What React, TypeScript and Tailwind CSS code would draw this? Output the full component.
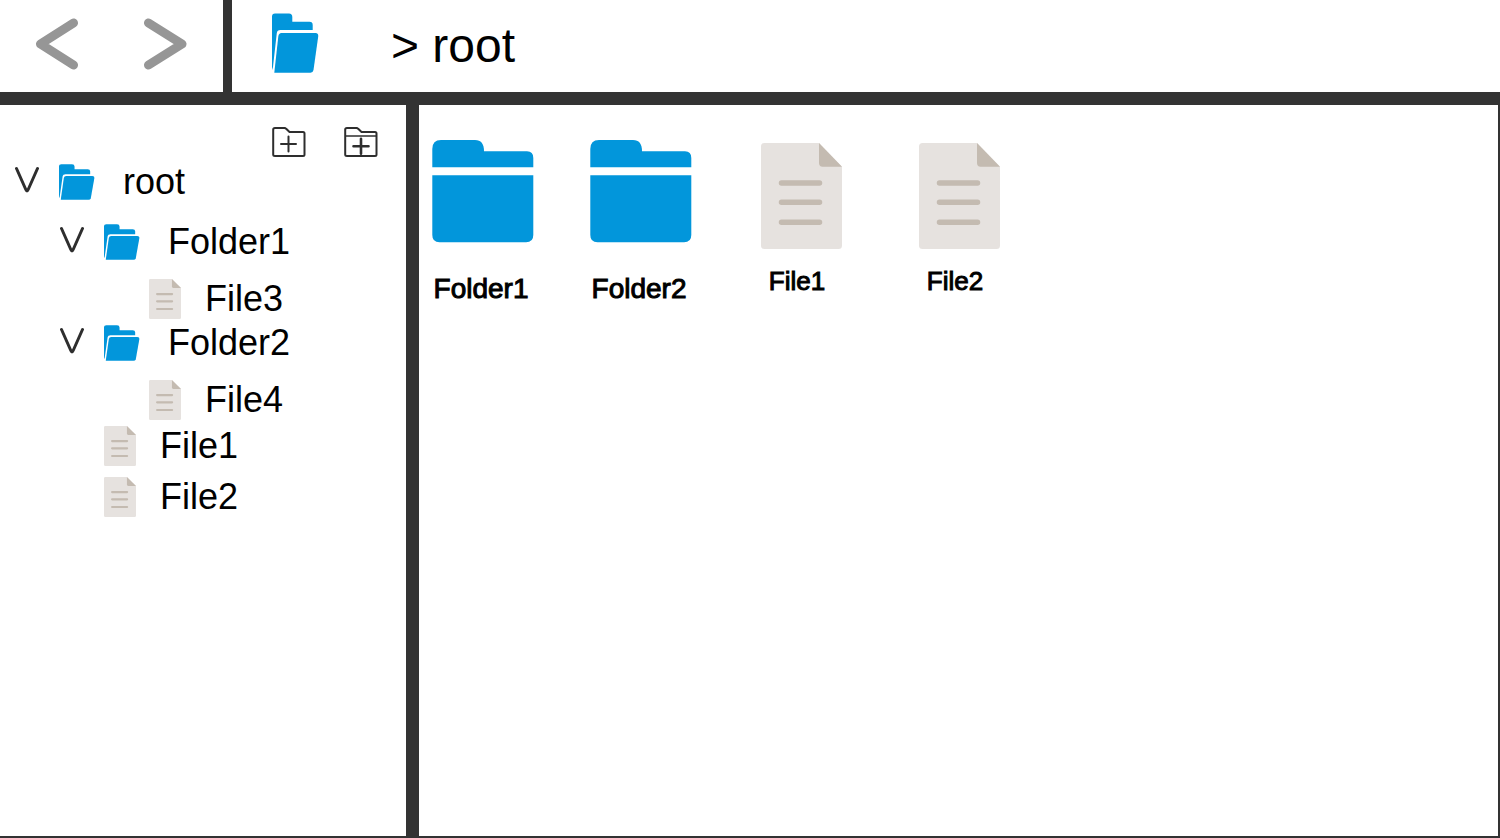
type IconProps = { className?: string };

function OpenFolderIcon({ className }: IconProps) {
  return (
    <svg className={className} viewBox="0 0 47 60" preserveAspectRatio="none" fill="#0296db" aria-hidden="true">
      <path d="M0 3.5Q0 .5 3 .5H17Q20.3 .5 20.3 4V8.7H37.5Q40.7 8.7 40.7 12V17H8.5Q5.1 17 4.8 20L1.2 52L.7 57L0 54Z" />
      <path d="M9.5 20H43.5Q46.6 20 46.2 23.5L41.5 57Q41 59.7 38.5 59.7H2.3L6.3 23.5Q6.7 20 9.5 20Z" />
    </svg>
  );
}

function FolderIcon({ className }: IconProps) {
  return (
    <svg className={className} viewBox="0 0 102 103" fill="#0296db" aria-hidden="true">
      <path d="M.3 9Q.3 0 9 0H43Q52 0 52 11.3H95Q101.3 11.3 101.3 18V27.3H.3Z" />
      <path d="M.3 35.3H101.3V95Q101.3 102.3 94 102.3H7.5Q.3 102.3 .3 95Z" />
    </svg>
  );
}

function FileIcon({ className }: IconProps) {
  return (
    <svg className={className} viewBox="0 0 81 106" preserveAspectRatio="none" aria-hidden="true">
      <path d="M3.5 0H58L81 23.7V102.5Q81 106 77.5 106H3.5Q0 106 0 102.5V3.5Q0 0 3.5 0Z" fill="#e6e2df" />
      <path d="M58 0L81 23.7H61.5Q58 23.7 58 20Z" fill="#c4bbb1" />
      <path d="M20.5 40H58.5M20.5 59.2H58.5M20.5 79.3H58.5" stroke="#c4bbb1" strokeWidth="5.5" strokeLinecap="round" />
    </svg>
  );
}

function ChevronIcon() {
  return (
    <svg className="mb-1 h-7 w-6 shrink-0" viewBox="0 0 24 28" fill="none" stroke="#2e2e2e" strokeWidth="3" strokeLinecap="round" strokeLinejoin="round" aria-hidden="true">
      <path d="M1.500 2.500L10.800 23.500Q12 26.500 13.200 23.500L22.500 2.500" />
    </svg>
  );
}

function NewFileIcon() {
  return (
    <svg className="h-8 w-[34px]" viewBox="0 0 34 32" fill="none" stroke="#2e2e2e" strokeWidth="2" aria-hidden="true">
      <path d="M3 2H12.5Q13.5 2 14.2 2.8L17.5 6H31Q32.5 6 32.5 7.5V28.5Q32.5 30 31 30H3Q1.200 30 1.200 28.5V3.5Q1.200 2 3 2Z" />
      <path d="M9 18H24M16.5 10.5V25.5" strokeLinecap="round" />
    </svg>
  );
}

function NewFolderIcon() {
  return (
    <svg className="h-8 w-[34px]" viewBox="0 0 34 32" fill="none" stroke="#2e2e2e" strokeWidth="2" aria-hidden="true">
      <path d="M3 2H12.5Q13.5 2 14.2 2.8L17.5 6H31Q32.5 6 32.5 7.5V28.5Q32.5 30 31 30H3Q1.200 30 1.200 28.5V3.5Q1.200 2 3 2Z" />
      <path d="M1.200 10H32.500" strokeWidth="1.500" />
      <path d="M9.500 20.300H24.500M17 12.800V27.800" strokeWidth="2.600" strokeLinecap="round" />
    </svg>
  );
}

type Node = { name: string; children?: Node[] };

const root: Node = {
  name: "root",
  children: [
    { name: "Folder1", children: [{ name: "File3" }] },
    { name: "Folder2", children: [{ name: "File4" }] },
    { name: "File1" },
    { name: "File2" },
  ],
};

function TreeNode({ node, depth }: { node: Node; depth: number }) {
  if (!node.children) {
    return (
      <li>
        <button
          type="button"
          className={`flex items-center gap-6 pl-11 text-[36px] leading-10 ${depth > 1 ? "h-[41px]" : "h-[51px]"}`}
        >
          <FileIcon className="h-10 w-8 shrink-0" />
          {node.name}
        </button>
      </li>
    );
  }
  return (
    <li>
      <button
        type="button"
        aria-expanded="true"
        className="mb-3 flex h-12 items-center gap-5 text-[36px] leading-10"
      >
        <ChevronIcon />
        <OpenFolderIcon className="h-9 w-9 shrink-0" />
        <span className="pl-2">{node.name}</span>
      </button>
      <ul className="pl-[45px]">
        {node.children.map((child) => (
          <TreeNode key={child.name} node={child} depth={depth + 1} />
        ))}
      </ul>
    </li>
  );
}

function GridItem({ node }: { node: Node }) {
  return (
    <li className="w-[102px]">
      <button type="button" className="flex w-full flex-col items-center [-webkit-text-stroke:1px_black]">
        {node.children ? (
          <>
            <FolderIcon className="h-[103px] w-[102px]" />
            <span className="mt-7 mr-1 text-[28px] leading-9">{node.name}</span>
          </>
        ) : (
          <>
            <FileIcon className="mt-[3px] ml-1 h-[106px] w-[81px]" />
            <span className="mt-4 mr-1 text-[26px] leading-8">{node.name}</span>
          </>
        )}
      </button>
    </li>
  );
}

export default function App() {
  return (
    <div className="flex min-h-screen flex-col border-b-2 border-[#333333] bg-white font-['Liberation_Sans',Arial,sans-serif] text-black">
      <header className="flex h-[105px] border-b-[13px] border-[#333333]">
        <div className="flex w-[232px] shrink-0 items-center gap-16 border-r-[9px] border-[#333333] pb-1 pl-[35px]">
          <button type="button" aria-label="Back">
            <svg className="h-[54px] w-11" viewBox="0 0 44 54" fill="none" stroke="#969696" strokeWidth="9" strokeLinecap="round" strokeLinejoin="round">
              <path d="M38.500 6L5.500 27L38.500 48" />
            </svg>
          </button>
          <button type="button" aria-label="Forward">
            <svg className="h-[54px] w-11" viewBox="0 0 44 54" fill="none" stroke="#969696" strokeWidth="9" strokeLinecap="round" strokeLinejoin="round">
              <path d="M5.500 6L39 27L5.500 48" />
            </svg>
          </button>
        </div>
        <nav aria-label="Path" className="flex items-center gap-[72px] pl-10">
          <OpenFolderIcon className="mb-[6px] h-[60px] w-[47px] shrink-0" />
          <span className="text-[48px] leading-[56px]">&gt; root</span>
        </nav>
      </header>
      <div className="flex flex-1">
        <aside className="w-[419px] shrink-0 border-r-[13px] border-[#333333] pt-[21px] pl-[15px]">
          <div className="flex h-8 justify-end gap-[38px] pr-7">
            <button type="button" aria-label="New file">
              <NewFileIcon />
            </button>
            <button type="button" aria-label="New folder">
              <NewFolderIcon />
            </button>
          </div>
          <ul>
            <TreeNode node={root} depth={0} />
          </ul>
        </aside>
        <main className="flex-1 border-r-2 border-[#333333] pt-[35px] pl-[13px]">
          <ul className="flex flex-wrap gap-14">
            {root.children?.map((child) => (
              <GridItem key={child.name} node={child} />
            ))}
          </ul>
        </main>
      </div>
    </div>
  );
}
